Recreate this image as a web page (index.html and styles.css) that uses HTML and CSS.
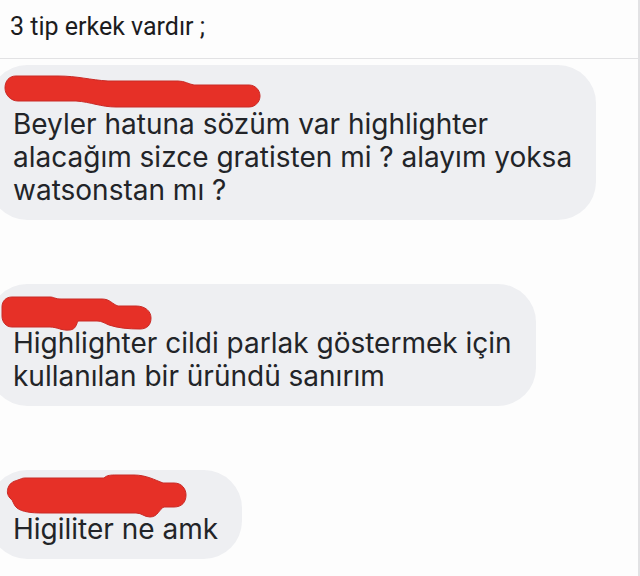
FILE: index.html
```
<!DOCTYPE html>
<html lang="tr">
<head>
    <meta charset="UTF-8">
    <title>3 tip erkek vardır</title>
    <link rel="stylesheet" href="styles.css">
</head>
<body>
<div class="post">
    <h1 class="title">3 tip erkek vardır ;</h1>
    <div class="comments">
        <div class="bubble">
            <svg class="name" width="300" height="60" viewBox="0 65 300 60" aria-hidden="true">
                <path d="M16 76H58C78 76 90 80 108 81H178C185 81 188 84 194 85H249C255 85 260 90 260 96C260 102 255 107 249 107H116C101 107 91 102 76 101H18C11 101 5 95 5 88C5 81 9 76 16 76Z"/>
            </svg>
            <p>Beyler hatuna sözüm var highlighter<br>alacağım sizce gratisten mi ? alayım yoksa<br>watsonstan mı ?</p>
        </div>
        <div class="bubble">
            <svg class="name" width="300" height="60" viewBox="0 284 300 60" aria-hidden="true">
                <path d="M12 297H50C54 297 55 299 61 299H102C110 299 112 304 118 306H136C145 306 151 311 151 318C151 325 147 329 140 329C128 329 118 328 109 325C104 323 102 321 97 321H78C76 325 76 329 70 330C62 331 57 327 50 327H12C6 327 2 322 2 316V307C2 301 6 297 12 297Z"/>
            </svg>
            <p>Highlighter cildi parlak göstermek için<br>kullanılan bir üründü sanırım</p>
        </div>
        <div class="bubble">
            <svg class="name" width="300" height="60" viewBox="0 470 300 60" aria-hidden="true">
                <path d="M25 478H104C107 475 111 475 116 475H134C146 475 155 480 163 483H174C182 483 186 489 186 495C186 502 182 507 174 507H164C159 509 158 517 150 517C144 517 142 513 136 513H42C32 513 22 512 17 508C13 505 14 501 10 498C7 495 7 491 8 488C10 482 15 481 18 480C21 479 22 478 25 478Z"/>
            </svg>
            <p>Higiliter ne amk</p>
        </div>
    </div>
</div>
</body>
</html>
```
FILE: styles.css
```
* {
    margin: 0;
    padding: 0;
    box-sizing: border-box;
}

body {
    background: #fdfdfd;
    overflow-x: hidden;
}

.post {
    min-height: 100vh;
    border-right: 2px solid #e2e2e4;
    overflow: hidden;
}

.title {
    padding: 12px 10px 17px;
    border-bottom: 1px solid #e2e2e4;
    font: 400 25px/29px Roboto, sans-serif;
    color: #1c1c1e;
}

.comments {
    display: flex;
    flex-direction: column;
    align-items: flex-start;
    gap: 64px;
    padding: 6px 0 16px;
}

/* the left side of a bubble runs off the screen */
.bubble {
    position: relative;
    margin-left: -11px;
    padding: 43px 24px 13px;
    border-radius: 38px;
    background: #eeeff2;
    font: 400 28px/33px Inter, sans-serif;
    color: #222428;
}

/* marker over the user name */
.name {
    position: absolute;
    top: 0;
    left: 11px;
}

.name path {
    fill: #e63027;
    stroke: #c92a26;
    stroke-width: 1;
}
```
